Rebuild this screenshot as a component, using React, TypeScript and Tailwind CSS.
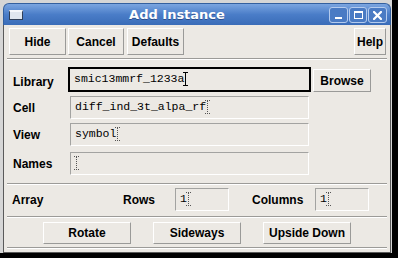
import React from 'react'

const ui = { fontFamily: '"Liberation Sans", Arial, sans-serif' }
const mono = { fontFamily: '"Liberation Mono", "Courier New", monospace' }

// raised X11/Motif style push button
const Btn = ({ children, className = '' }: any) => (
  <div
    className={`flex items-center justify-center bg-[#ece9e4] border border-t-white border-l-white border-b-[#9a9a98] border-r-[#9a9a98] text-[12px] font-bold text-black ${className}`}
    style={ui}
  >
    {children}
  </div>
)

const Cursor = ({ dotted = false }: { dotted?: boolean }) => (
  <span className="relative inline-block w-[5px] h-[14px] align-middle -ml-[1px]">
    <span
      className={`absolute left-[2px] top-0 h-[14px] w-0 border-l ${dotted ? 'border-dotted border-[#555]' : 'border-solid border-black'}`}
    />
    <span className={`absolute left-0 top-0 w-[5px] h-0 border-t ${dotted ? 'border-dotted border-[#555]' : 'border-black'}`} />
    <span className={`absolute left-0 bottom-0 w-[5px] h-0 border-t ${dotted ? 'border-dotted border-[#555]' : 'border-black'}`} />
  </span>
)

const Field = ({ value = '', focused = false, className = '' }: any) => (
  <div
    className={`flex items-center pl-[4px] pb-[2px] text-[11.5px] text-black bg-[#ece9e4] leading-[14px] ${
      focused
        ? 'border-2 border-black h-[25px] pl-[4px]'
        : 'border border-t-[#a3a3a1] border-l-[#a3a3a1] border-b-white border-r-white h-[23px]'
    } ${className}`}
    style={mono}
  >
    <span className="whitespace-pre">{value}</span>
    <Cursor dotted={!focused} />
  </div>
)

const Separator = ({ className = '' }: any) => (
  <div className={`mx-[3px] h-[2px] border-t border-t-[#9c9b98] border-b border-b-white ${className}`} />
)

const Label = ({ children, className = '' }: any) => (
  <div className={`text-[12px] font-bold text-black ${className}`} style={ui}>
    {children}
  </div>
)

export default function App() {
  return (
    <div className="w-[398px] h-[258px] bg-black overflow-hidden">
      <div className="w-[392px] h-[253px] bg-[#d6d6d6] pt-[3px] pl-[3px]">
        <div className="w-[388px] h-[250px] flex flex-col">
          {/* Title bar */}
          <div className="h-[22px] flex items-center rounded-t-[6px] bg-gradient-to-b from-[#7ba5e0] via-[#4a7dc8] to-[#3a6cb8] border border-[#34609f] border-b-0">
            <div className="ml-[5px] w-[14px] h-[10px] border border-[#2f3f58] bg-[#dfe6ef] border-t-2 border-t-[#f4f7fb]" />
            <div
              className="flex-1 text-center text-white text-[13px] font-bold pl-[2px] [text-shadow:0_1px_0_rgba(0,0,40,0.35)]"
              style={{ fontFamily: '"DejaVu Sans", Verdana, sans-serif' }}
            >
              Add Instance
            </div>
            <div className="flex gap-[1px] mr-[3px] mt-[1px]">
              <div className="w-[19px] h-[16px] rounded-[3px] border border-[#b4cbee] bg-[#4a7bc4] flex items-end justify-center pb-[3px]">
                <div className="w-[7px] h-[2px] bg-white" />
              </div>
              <div className="w-[18px] h-[16px] rounded-[3px] border border-[#b4cbee] bg-[#4a7bc4] flex items-center justify-center">
                <div className="w-[9px] h-[8px] border border-white border-t-2" />
              </div>
              <div className="w-[19px] h-[16px] rounded-[3px] border border-[#b4cbee] bg-[#4a7bc4] flex items-center justify-center">
                <svg width="9" height="9" viewBox="0 0 9 9">
                  <path d="M1 1 L8 8 M8 1 L1 8" stroke="white" strokeWidth="2.2" strokeLinecap="square" />
                </svg>
              </div>
            </div>
          </div>

          {/* Body */}
          <div className="flex-1 flex flex-col bg-[#ece9e4] border border-t-0 border-[#5a5a5a]">
            {/* Toolbar */}
            <div className="flex mt-[3px] h-[27px]">
              <Btn className="ml-[5px] w-[57px]">Hide</Btn>
              <Btn className="ml-[2px] w-[56px]">Cancel</Btn>
              <Btn className="ml-[3px] w-[57px]">Defaults</Btn>
              <div className="flex-1" />
              <Btn className="mr-[4px] w-[32px]">Help</Btn>
            </div>

            <Separator className="mt-[3px]" />

            {/* Form */}
            <div className="flex items-start mt-[7px] h-[25px]">
              <Label className="w-[64px] pl-[9px] mt-[6px]">Library</Label>
              <Field value="smic13mmrf_1233a" focused className="w-[243px]" />
              <Btn className="ml-[2px] mt-[2px] w-[58px] h-[23px]">Browse</Btn>
            </div>
            <div className="flex items-center mt-[4px] h-[23px]">
              <Label className="w-[66px] pl-[9px]">Cell</Label>
              <Field value="diff_ind_3t_alpa_rf" className="w-[239px]" />
            </div>
            <div className="flex items-center mt-[4px] h-[23px]">
              <Label className="w-[66px] pl-[9px]">View</Label>
              <Field value="symbol" className="w-[239px]" />
            </div>
            <div className="flex items-center mt-[6px] h-[23px]">
              <Label className="w-[66px] pl-[9px]">Names</Label>
              <Field value="" className="w-[239px]" />
            </div>

            <Separator className="mt-[8px]" />

            {/* Array */}
            <div className="flex items-center mt-[3px] h-[23px]">
              <Label className="w-[119px] pl-[8px]">Array</Label>
              <Label className="w-[52px]">Rows</Label>
              <Field value="1" className="w-[54px]" />
              <Label className="ml-[23px] w-[63px]">Columns</Label>
              <Field value="1" className="w-[54px]" />
            </div>

            <Separator className="mt-[5px]" />

            <div className="flex justify-center gap-[22px] mt-[4px]">
              <Btn className="w-[88px] h-[22px]">Rotate</Btn>
              <Btn className="w-[88px] h-[22px]">Sideways</Btn>
              <Btn className="w-[88px] h-[22px]">Upside Down</Btn>
            </div>

            <Separator className="mt-[3px]" />
          </div>
        </div>
      </div>
    </div>
  )
}
